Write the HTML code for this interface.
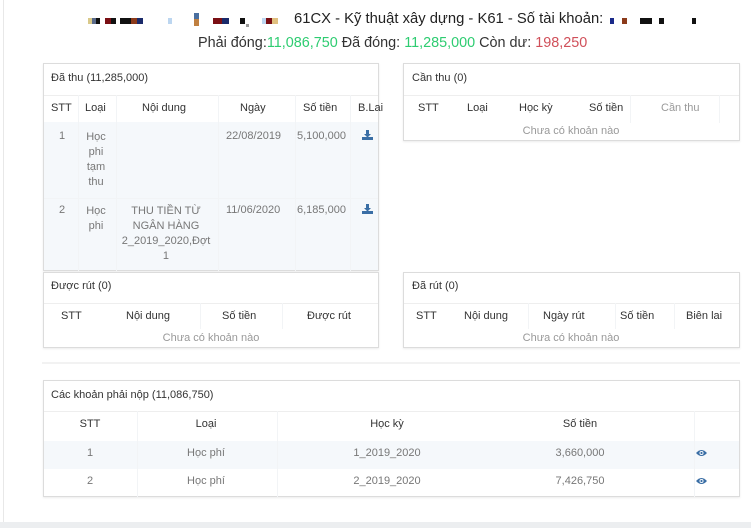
<!DOCTYPE html>
<html><head><meta charset="utf-8"><style>
*{margin:0;padding:0;box-sizing:border-box}
body{width:751px;height:528px;background:#fff;font-family:"Liberation Sans","DejaVu Sans",sans-serif;color:#333;position:relative;overflow:hidden}
.a{position:absolute;white-space:nowrap}
.c{transform:translateX(-50%)}
.card{position:absolute;border:1px solid #dcdcdc;background:#fff;box-shadow:0 1px 2px rgba(0,0,0,.08)}
.t{font-size:11px;color:#333}
.h{font-size:11px;color:#333}
.g{font-size:11px;color:#777}
.b{position:absolute;height:6px;top:18px}
.v{position:absolute;width:1px;background:#f2f4f6}
</style></head><body>
<div style="position:absolute;left:3px;top:0;width:1px;height:522px;background:#e8e8e8"></div>
<div style="position:absolute;left:0;top:522px;width:751px;height:6px;background:#eceef0"></div>

<div class="b" style="left:88px;width:4px;background:#d9c98a"></div>
<div class="b" style="left:92px;width:4px;background:#5a6b8a"></div>
<div class="b" style="left:96px;width:4px;background:#111"></div>
<div class="b" style="left:105px;width:6px;background:#7a0f14"></div>
<div class="b" style="left:111px;width:5px;background:#111"></div>
<div class="b" style="left:120px;width:11px;background:#111"></div>
<div class="b" style="left:131px;width:6px;background:#8b3a1a"></div>
<div class="b" style="left:137px;width:6px;background:#1a2a6a"></div>
<div class="b" style="left:168px;width:4px;background:#bcd6f0"></div>
<div class="b" style="left:194px;width:5px;top:13px;height:6px;background:#4a6fa0"></div>
<div class="b" style="left:194px;width:5px;top:19px;height:7px;background:#c08040"></div>
<div class="b" style="left:213px;width:9px;background:#7a0f14"></div>
<div class="b" style="left:222px;width:7px;background:#1a2a6a"></div>
<div class="b" style="left:240px;width:5px;background:#111"></div>
<div class="b" style="left:246px;width:3px;top:24px;height:3px;background:#999"></div>
<div class="b" style="left:262px;width:4px;background:#bcd6f0"></div>
<div class="b" style="left:266px;width:6px;background:#7a0f14"></div>
<div class="b" style="left:272px;width:6px;background:#e0c080"></div>
<div class="b" style="left:610px;width:4px;background:#1a2a8a"></div>
<div class="b" style="left:622px;width:5px;background:#8b3a1a"></div>
<div class="b" style="left:640px;width:12px;background:#111"></div>
<div class="b" style="left:659px;width:5px;background:#111"></div>
<div class="b" style="left:692px;width:4px;background:#111"></div>

<div class="a" style="left:294px;top:11px;font-size:14.8px;color:#222">61CX - Kỹ thuật xây dựng - K61 - Số tài khoản:</div>
<div class="a" style="left:198px;top:35px;font-size:14.4px;color:#333">Phải đóng:<span style="color:#2ecc71">11,086,750</span> Đã đóng: <span style="color:#2ecc71">11,285,000</span> Còn dư: <span style="color:#d0505a">198,250</span></div>

<div class="card" style="left:43px;top:63px;width:336px;height:208px">
<div style="position:absolute;left:0;top:58px;width:334px;height:148px;background:#f5f8fb"></div>
<div style="position:absolute;left:0;top:31px;width:334px;height:1px;background:#eee"></div>
<div class="v" style="left:34px;top:31px;height:176px"></div>
<div class="v" style="left:72px;top:31px;height:176px"></div>
<div class="v" style="left:174px;top:31px;height:176px"></div>
<div class="v" style="left:251px;top:31px;height:176px"></div>
<div class="v" style="left:306px;top:31px;height:176px"></div>
<div class="v" style="left:0;top:134px;width:334px;height:1px"></div>
</div>
<div class="a t" style="left:51px;top:72px">Đã thu (11,285,000)</div>
<div class="a h" style="left:51px;top:102px">STT</div>
<div class="a h" style="left:85px;top:102px">Loại</div>
<div class="a h" style="left:142px;top:102px">Nội dung</div>
<div class="a h" style="left:240px;top:102px">Ngày</div>
<div class="a h" style="left:303px;top:102px">Số tiền</div>
<div class="a h" style="left:358px;top:102px">B.Lai</div>
<div class="a g" style="left:59px;top:130px">1</div>
<div class="a g c" style="left:96px;top:130px;text-align:center;line-height:15px">Học<br>phi<br>tạm<br>thu</div>
<div class="a g" style="left:226px;top:130px">22/08/2019</div>
<div class="a g" style="left:297px;top:130px">5,100,000</div>
<div class="a g" style="left:59px;top:204px">2</div>
<div class="a g c" style="left:96px;top:204px;text-align:center;line-height:15px">Học<br>phi</div>
<div class="a g c" style="left:166px;top:204px;text-align:center;line-height:15px">THU TIỀN TỪ<br>NGÂN HÀNG<br>2_2019_2020,Đợt<br>1</div>
<div class="a g" style="left:226px;top:204px">11/06/2020</div>
<div class="a g" style="left:297px;top:204px">6,185,000</div>
<svg class="a" style="left:362px;top:130px" width="11" height="10" viewBox="0 0 11 10"><path d="M4 0h3v4h2L5.5 7.5 2 4h2z" fill="#3a6ea5"/><rect x="0" y="7" width="11" height="3" fill="#3a6ea5"/></svg>
<svg class="a" style="left:362px;top:204px" width="11" height="10" viewBox="0 0 11 10"><path d="M4 0h3v4h2L5.5 7.5 2 4h2z" fill="#3a6ea5"/><rect x="0" y="7" width="11" height="3" fill="#3a6ea5"/></svg>

<div class="card" style="left:403px;top:63px;width:337px;height:78px">
<div style="position:absolute;left:0;top:31px;width:335px;height:1px;background:#eee"></div>
<div class="v" style="left:226px;top:31px;height:28px"></div>
<div class="v" style="left:315px;top:31px;height:28px"></div>
</div>
<div class="a t" style="left:412px;top:72px">Cần thu (0)</div>
<div class="a h" style="left:418px;top:102px">STT</div>
<div class="a h" style="left:467px;top:102px">Loại</div>
<div class="a h" style="left:519px;top:102px">Học kỳ</div>
<div class="a h" style="left:589px;top:102px">Số tiền</div>
<div class="a h" style="left:661px;top:102px;color:#999">Cần thu</div>
<div class="a g c" style="left:571px;top:125px;color:#999">Chưa có khoản nào</div>

<div class="card" style="left:43px;top:272px;width:336px;height:76px">
<div style="position:absolute;left:0;top:30px;width:334px;height:1px;background:#eee"></div>
<div class="v" style="left:156px;top:30px;height:26px"></div>
<div class="v" style="left:238px;top:30px;height:26px"></div>
</div>
<div class="a t" style="left:51px;top:280px">Được rút (0)</div>
<div class="a h" style="left:61px;top:310px">STT</div>
<div class="a h" style="left:126px;top:310px">Nội dung</div>
<div class="a h" style="left:222px;top:310px">Số tiền</div>
<div class="a h" style="left:307px;top:310px">Được rút</div>
<div class="a g c" style="left:211px;top:332px;color:#999">Chưa có khoản nào</div>

<div class="card" style="left:403px;top:272px;width:337px;height:76px">
<div style="position:absolute;left:0;top:30px;width:335px;height:1px;background:#eee"></div>
<div class="v" style="left:124px;top:30px;height:26px"></div>
<div class="v" style="left:211px;top:30px;height:26px"></div>
<div class="v" style="left:270px;top:30px;height:26px"></div>
</div>
<div class="a t" style="left:412px;top:280px">Đã rút (0)</div>
<div class="a h" style="left:416px;top:310px">STT</div>
<div class="a h" style="left:464px;top:310px">Nội dung</div>
<div class="a h" style="left:543px;top:310px">Ngày rút</div>
<div class="a h" style="left:620px;top:310px">Số tiền</div>
<div class="a h" style="left:686px;top:310px">Biên lai</div>
<div class="a g c" style="left:571px;top:332px;color:#999">Chưa có khoản nào</div>

<div style="position:absolute;left:42px;top:362px;width:698px;height:2px;background:#f2f2f2"></div>

<div class="card" style="left:43px;top:380px;width:697px;height:117px">
<div style="position:absolute;left:0;top:30px;width:695px;height:1px;background:#eee"></div>
<div style="position:absolute;left:0;top:60px;width:695px;height:28px;background:#f5f8fb"></div>
<div class="v" style="left:93px;top:30px;height:86px"></div>
<div class="v" style="left:233px;top:30px;height:86px"></div>
<div class="v" style="left:650px;top:30px;height:86px"></div>
</div>
<div class="a t" style="left:51px;top:389px">Các khoản phải nộp (11,086,750)</div>
<div class="a h c" style="left:90px;top:418px">STT</div>
<div class="a h c" style="left:206px;top:418px">Loại</div>
<div class="a h c" style="left:387px;top:418px">Học kỳ</div>
<div class="a h c" style="left:580px;top:418px">Số tiền</div>
<div class="a g c" style="left:90px;top:447px">1</div>
<div class="a g c" style="left:206px;top:447px">Học phí</div>
<div class="a g c" style="left:387px;top:447px">1_2019_2020</div>
<div class="a g c" style="left:580px;top:447px">3,660,000</div>
<div class="a g c" style="left:90px;top:475px">2</div>
<div class="a g c" style="left:206px;top:475px">Học phí</div>
<div class="a g c" style="left:387px;top:475px">2_2019_2020</div>
<div class="a g c" style="left:580px;top:475px">7,426,750</div>
<svg class="a" style="left:696px;top:449px" width="11" height="8" viewBox="0 0 11 8"><path d="M0 4Q5.5-2 11 4Q5.5 10 0 4z" fill="#3a6ea5"/><circle cx="5.5" cy="4" r="2" fill="#fff"/><circle cx="5.5" cy="4" r="1.1" fill="#3a6ea5"/></svg>
<svg class="a" style="left:696px;top:477px" width="11" height="8" viewBox="0 0 11 8"><path d="M0 4Q5.5-2 11 4Q5.5 10 0 4z" fill="#3a6ea5"/><circle cx="5.5" cy="4" r="2" fill="#fff"/><circle cx="5.5" cy="4" r="1.1" fill="#3a6ea5"/></svg>
</body></html>
